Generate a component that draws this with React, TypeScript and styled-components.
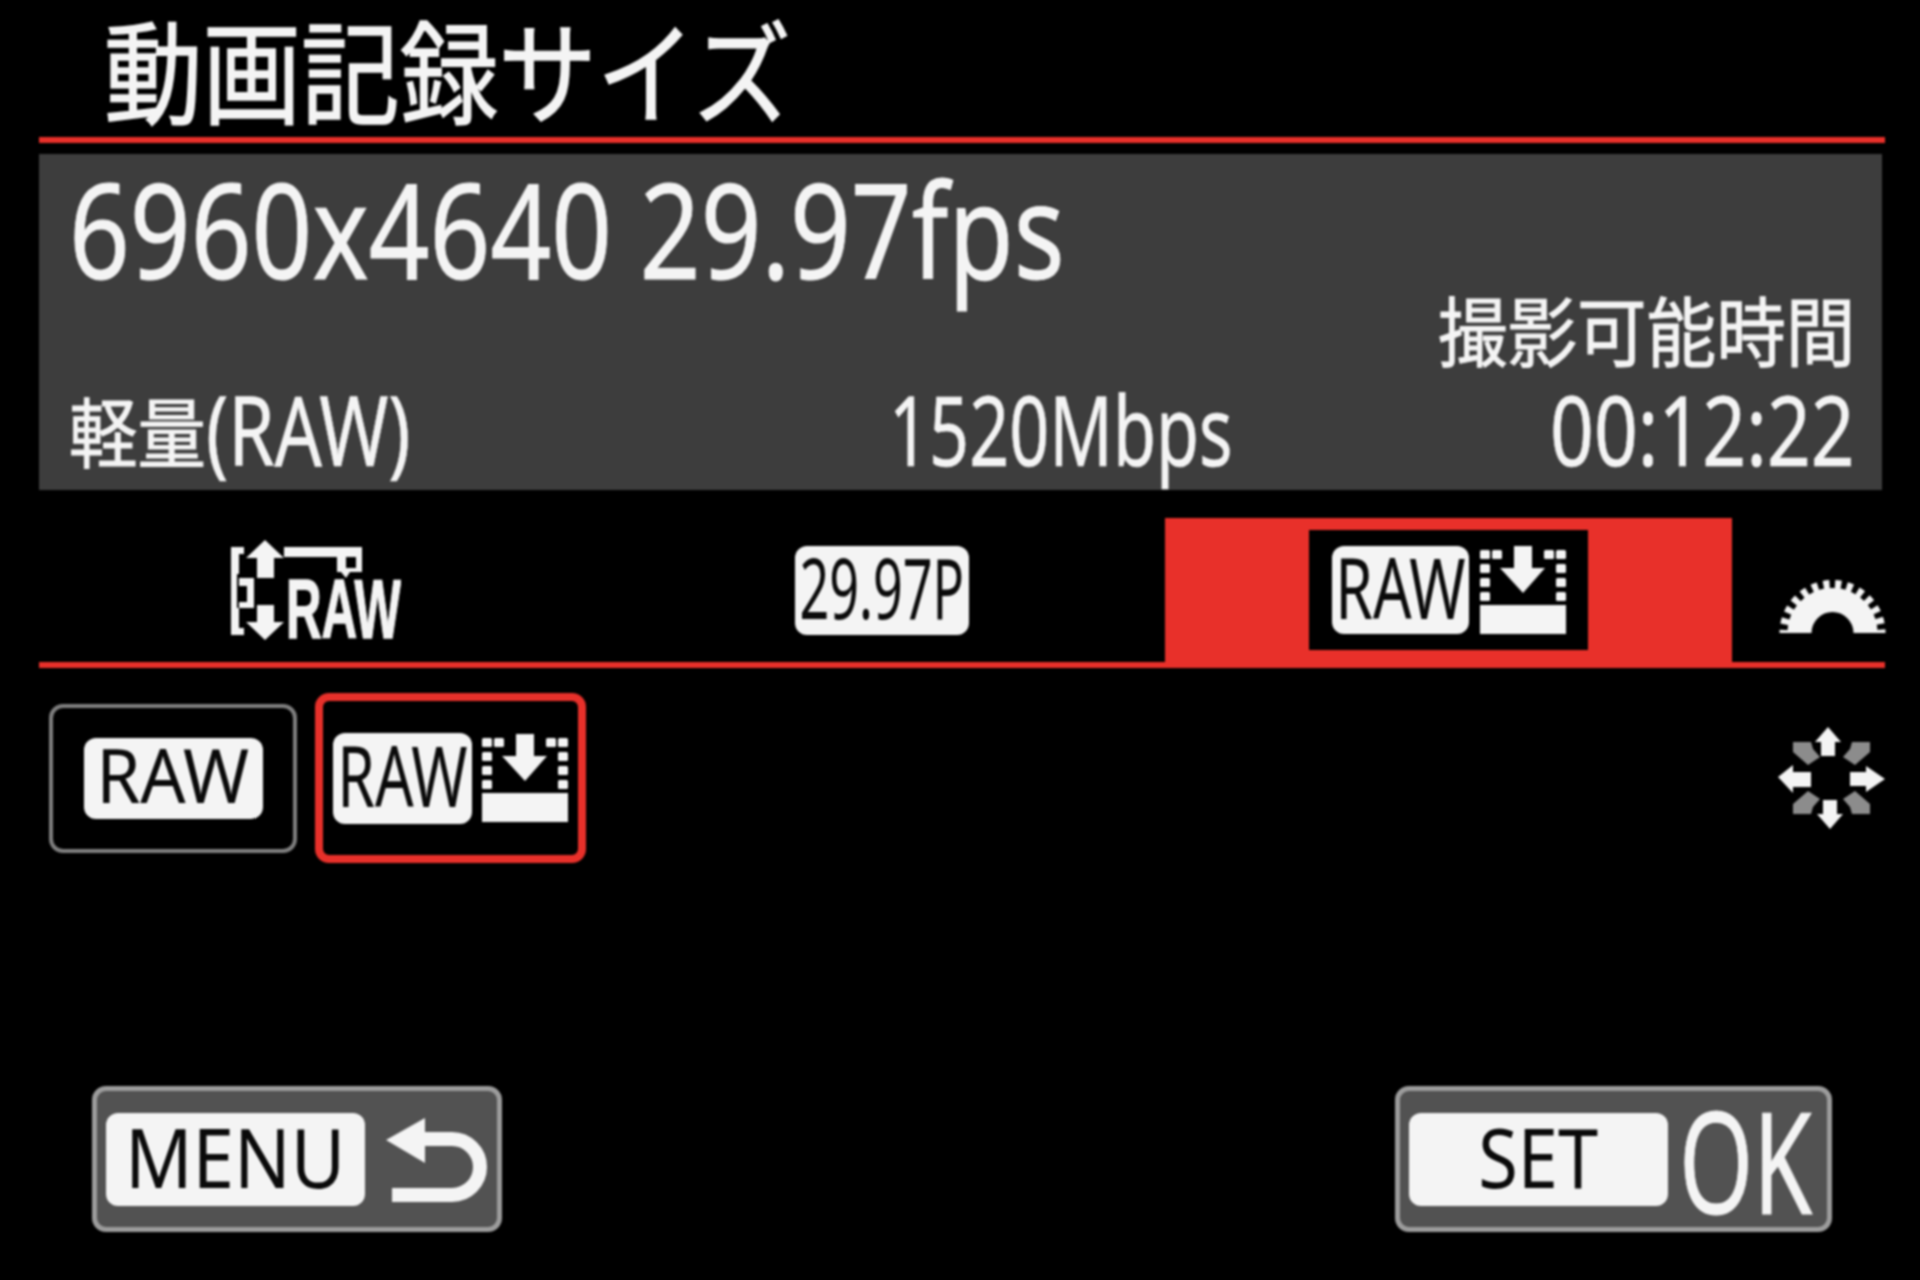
import * as React from 'react';
import styled, { createGlobalStyle } from 'styled-components';

const LATIN = `"Noto Sans", "Noto Sans CJK JP", sans-serif`;
const KANJI = `"Noto Sans CJK JP", "Noto Sans", sans-serif`;
const RED = '#e8302a';
const WHITE = '#f4f4f4';

const GlobalStyle = createGlobalStyle`
  html, body {
    margin: 0;
    background: #000;
  }
`;

const Root = styled.main`
  width: 1920px;
  height: 1280px;
  overflow: hidden;
  display: flex;
  flex-direction: column;
  background: #000;
  color: ${WHITE};
  font-family: ${LATIN};
  filter: blur(0.8px);
`;

// the camera font is much narrower than anything installed, so text is squeezed
const Fit = styled.span<{ $w: number; $scale: number }>`
  display: inline-block;
  width: ${({ $w }) => $w}px;
  white-space: nowrap;
  & > span {
    display: inline-block;
    transform: scaleX(${({ $scale }) => $scale});
    transform-origin: left center;
  }
`;

const Title = styled.h1`
  margin: 0;
  height: 137px;
  flex: none;
  padding-left: 104px;
  box-sizing: border-box;
  font: 400 112px/134px ${KANJI};
  -webkit-text-stroke: 1.5px ${WHITE};
`;

const RedLine = styled.div`
  height: 6px;
  margin: 0 35px 0 39px;
  background: ${RED};
  flex: none;
`;

const InfoPanel = styled.section`
  height: 336px;
  flex: none;
  box-sizing: border-box;
  margin: 11px 38px 0 39px;
  padding: 8px 26px 15px 30px;
  background: #3d3d3d;
  display: flex;
  flex-direction: column;
  justify-content: space-between;
`;

const SizeLine = styled.div`
  height: 120px;
  font-size: 132px;
  line-height: 132px;
  -webkit-text-stroke: 1px ${WHITE};
`;

const InfoRow = styled.div`
  display: grid;
  grid-template-columns: 820px 340px 1fr;
  align-items: end;
  font-size: 96px;
  line-height: 92px;
  -webkit-text-stroke: 0.6px ${WHITE};
`;

const TypeLabel = styled.div`
  display: flex;
`;

const Kanji = styled.span`
  font: 400 76px/92px ${KANJI};
  -webkit-text-stroke: 1px ${WHITE};
`;

const TimeBlock = styled.div`
  display: flex;
  flex-direction: column;
  align-items: flex-end;
  gap: 9px;
`;

const TabRow = styled.nav`
  height: 144px;
  flex: none;
  margin-top: 28px;
  padding-left: 31px;
  display: grid;
  grid-template-columns: repeat(3, 567px) 1fr;
`;

const Tab = styled.div<{ $active?: boolean }>`
  display: flex;
  align-items: center;
  justify-content: center;
  background: ${({ $active }) => ($active ? RED : 'transparent')};
`;

const ActiveBox = styled.div`
  width: 279px;
  height: 120px;
  background: #000;
  display: flex;
  align-items: center;
  justify-content: center;
  gap: 11px;
`;

const DialSlot = styled.div`
  padding: 62px 0 0 47px;
`;

const Badge = styled.div<{ $w: number; $h: number; $size: number; $scale: number }>`
  width: ${({ $w }) => $w}px;
  height: ${({ $h }) => $h}px;
  flex: none;
  border-radius: 12px;
  background: ${WHITE};
  color: #0a0a0a;
  display: flex;
  align-items: center;
  justify-content: center;
  white-space: nowrap;
  font-size: ${({ $size }) => $size}px;
  line-height: 1;
  & > span {
    display: inline-block;
    margin-top: -7px;
    transform: scaleX(${({ $scale }) => $scale});
  }
`;

const OptionRow = styled.section`
  height: 170px;
  flex: none;
  margin-top: 25px;
  padding: 0 35px 0 49px;
  display: flex;
  align-items: center;
  gap: 18px;
`;

const Option = styled.div<{ $selected?: boolean }>`
  box-sizing: border-box;
  width: ${({ $selected }) => ($selected ? 271 : 248)}px;
  height: ${({ $selected }) => ($selected ? 170 : 149)}px;
  border: ${({ $selected }) => ($selected ? `8px solid ${RED}` : '4px solid #7f7f7f')};
  border-radius: 14px;
  display: flex;
  align-items: center;
  justify-content: center;
  gap: 10px;
`;

const DirectionSlot = styled.div`
  margin-left: auto;
  display: flex;
`;

const Footer = styled.footer`
  margin-top: 223px;
  padding: 0 88px 0 92px;
  display: flex;
  justify-content: space-between;
`;

const KeyButton = styled.div<{ $w: number; $gap: number }>`
  width: ${({ $w }) => $w}px;
  height: 146px;
  box-sizing: border-box;
  padding: 22px 10px 21px 9px;
  border: 5px solid #9c9c9c;
  border-radius: 14px;
  background: #525252;
  display: flex;
  align-items: center;
  gap: ${({ $gap }) => $gap}px;
`;

const OkText = styled(Fit)`
  font-size: 140px;
  line-height: 92px;
  -webkit-text-stroke: 1px ${WHITE};
`;

const RawSizeIcon = () => (
  <svg width="172" height="100" viewBox="0 0 172 100" fill={WHITE}>
    <path d="M2 7h13v7h-5v20h-2v34h2v20h5v7H2z" />
    <path d="M10 38h15v30H10v-6h8V46h-8z" />
    <path d="M36 0l19 18H45v20H28V18H17z" />
    <path d="M36 100l19-18H45V65H28v17H17z" />
    <path fillRule="evenodd" d="M55 7h78v25h-12l-4 6-5-6h-4V17H55zM117 17v11h10V17z" />
    <text
      x="57"
      y="98"
      fontFamily="Liberation Sans"
      fontWeight="700"
      fontSize="84"
      textLength="115"
      lengthAdjust="spacingAndGlyphs"
      stroke={WHITE}
      strokeWidth="1.5"
    >
      RAW
    </text>
  </svg>
);

const SaveIcon = () => (
  <svg width="86" height="88" viewBox="0 -4 86 88" fill={WHITE}>
    {[
      [0, 0],
      [12, 0],
      [64, 0],
      [76, 0],
      [0, 14],
      [0, 28],
      [0, 42],
      [76, 14],
      [76, 28],
      [76, 42]
    ].map(([x, y]) => (
      <rect key={`${x}-${y}`} x={x} y={y} width="10" height="9" rx="1.5" />
    ))}
    <path d="M34-4h18v22h13L43 43 20 18h14z" />
    <rect y="55" width="86" height="29" />
  </svg>
);

const DialIcon = () => (
  <svg width="107" height="53" viewBox="0 0 107 53">
    <path d="M20.5 53a33 33 0 0 1 66 0" fill="none" stroke={WHITE} strokeWidth="24" />
    <path
      d="M5.5 53a48 48 0 0 1 96 0"
      fill="none"
      stroke={WHITE}
      strokeWidth="10"
      strokeDasharray="6 5.55"
      strokeDashoffset="3"
    />
  </svg>
);

const DirectionIcon = () => (
  <svg width="107" height="102" viewBox="0 0 107 102">
    <g fill="#8c8c8c">
      <path d="M15 15h18l2 7 7 8-12 8-15-13z" />
      <path d="M92 15H74l-2 7-7 8 12 8 15-13z" />
      <path d="M15 87h18l2-7 7-8-12-8-15 13z" />
      <path d="M92 87H74l-2-7-7-8 12-8 15 13z" />
    </g>
    <g fill={WHITE}>
      <path d="M50 0l13 15h-6v14H43V15h-6z" />
      <path d="M52 102L39 87h6V73h14v14h6z" />
      <path d="M0 50l15-12v7h18v15H15v6z" />
      <path d="M107 52L88 65v-6H72V45h16v-6z" />
    </g>
  </svg>
);

const BackIcon = () => (
  <svg width="101" height="84" viewBox="0 0 101 84">
    <path d="M39 0v45L0 22z" fill={WHITE} />
    <path d="M36 21h30a28 28 0 0 1 0 56H6" fill="none" stroke={WHITE} strokeWidth="14" />
  </svg>
);

const App: React.FC = () => (
  <Root>
    <GlobalStyle />
    <Title>
      <Fit $w={682} $scale={0.88}>
        <span>動画記録サイズ</span>
      </Fit>
    </Title>
    <RedLine />
    <InfoPanel>
      <SizeLine>
        <Fit $w={992} $scale={0.806}>
          <span>6960x4640 29.97fps</span>
        </Fit>
      </SizeLine>
      <InfoRow>
        <TypeLabel>
          <Kanji>
            <Fit $w={137} $scale={0.9}>
              <span>軽量</span>
            </Fit>
          </Kanji>
          <Fit $w={205} $scale={0.775}>
            <span>(RAW)</span>
          </Fit>
        </TypeLabel>
        <Fit $w={340} $scale={0.73}>
          <span>1520Mbps</span>
        </Fit>
        <TimeBlock>
          <Kanji>
            <Fit $w={418} $scale={0.915}>
              <span>撮影可能時間</span>
            </Fit>
          </Kanji>
          <Fit $w={306} $scale={0.8}>
            <span>00:12:22</span>
          </Fit>
        </TimeBlock>
      </InfoRow>
    </InfoPanel>
    <TabRow>
      <Tab>
        <RawSizeIcon />
      </Tab>
      <Tab>
        <Badge $w={174} $h={89} $size={84} $scale={0.62}>
          <span>29.97P</span>
        </Badge>
      </Tab>
      <Tab $active>
        <ActiveBox>
          <Badge $w={137} $h={88} $size={84} $scale={0.72}>
            <span>RAW</span>
          </Badge>
          <SaveIcon />
        </ActiveBox>
      </Tab>
      <DialSlot>
        <DialIcon />
      </DialSlot>
    </TabRow>
    <RedLine />
    <OptionRow>
      <Option>
        <Badge $w={179} $h={81} $size={74} $scale={0.96}>
          <span>RAW</span>
        </Badge>
      </Option>
      <Option $selected>
        <Badge $w={139} $h={91} $size={84} $scale={0.72}>
          <span>RAW</span>
        </Badge>
        <SaveIcon />
      </Option>
      <DirectionSlot>
        <DirectionIcon />
      </DirectionSlot>
    </OptionRow>
    <Footer>
      <KeyButton $w={410} $gap={21}>
        <Badge $w={259} $h={93} $size={82} $scale={0.91}>
          <span>MENU</span>
        </Badge>
        <BackIcon />
      </KeyButton>
      <KeyButton $w={437} $gap={11}>
        <Badge $w={259} $h={93} $size={82} $scale={0.88}>
          <span>SET</span>
        </Badge>
        <OkText $w={128} $scale={0.68}>
          <span>OK</span>
        </OkText>
      </KeyButton>
    </Footer>
  </Root>
);

export default App;
